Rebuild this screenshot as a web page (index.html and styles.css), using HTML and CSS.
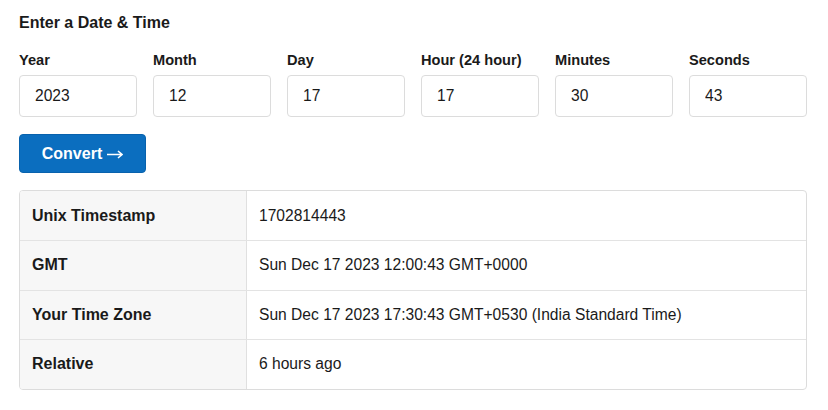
FILE: index.html
```html
<!DOCTYPE html>
<html>
<head>
<meta charset="utf-8">
<link rel="stylesheet" href="styles.css">
</head>
<body>
<div class="page">
  <h2 class="title">Enter a Date &amp; Time</h2>
  <div class="fields">
    <label class="field"><span class="label">Year</span><input class="input" value="2023"></label>
    <label class="field"><span class="label">Month</span><input class="input" value="12"></label>
    <label class="field"><span class="label">Day</span><input class="input" value="17"></label>
    <label class="field"><span class="label">Hour (24 hour)</span><input class="input" value="17"></label>
    <label class="field"><span class="label">Minutes</span><input class="input" value="30"></label>
    <label class="field"><span class="label">Seconds</span><input class="input" value="43"></label>
  </div>
  <button class="btn">Convert<svg class="arrow" width="16" height="10" viewBox="0 0 16 10"><path d="M0 5.5H15M11 2L15 5.5L11 9" fill="none" stroke="#fff" stroke-width="1.6"/></svg></button>
  <div class="result">
    <div class="row"><div class="key">Unix Timestamp</div><div class="val">1702814443</div></div>
    <div class="row"><div class="key">GMT</div><div class="val">Sun Dec 17 2023 12:00:43 GMT+0000</div></div>
    <div class="row"><div class="key">Your Time Zone</div><div class="val">Sun Dec 17 2023 17:30:43 GMT+0530 (India Standard Time)</div></div>
    <div class="row"><div class="key">Relative</div><div class="val">6 hours ago</div></div>
  </div>
</div>
</body>
</html>
```
FILE: styles.css
```css
* { box-sizing: border-box; }
html, body { margin: 0; background: #fff; }
body {
  font-family: "Liberation Sans", Arial, sans-serif;
  color: #1a1a1a;
}
.page {
  padding: 13px 22px 0 19px;
  width: 828px;
}
.title {
  margin: 0;
  font-size: 16px;
  line-height: 20px;
  font-weight: bold;
}
.fields {
  display: grid;
  grid-template-columns: repeat(6, 118px);
  column-gap: 16px;
  margin-top: 18px;
}
.field { display: flex; flex-direction: column; }
.label {
  font-size: 14.6px;
  line-height: 18px;
  font-weight: bold;
}
.input {
  margin-top: 6px;
  height: 42px;
  width: 118px;
  border: 1px solid #dcdcdc;
  border-radius: 4px;
  padding: 0 15px;
  font-family: inherit;
  font-size: 15.6px;
  color: #1a1a1a;
  background: #fff;
  outline: none;
}
.btn {
  display: flex;
  align-items: center;
  justify-content: center;
  gap: 5px;
  margin-top: 17px;
  width: 127px;
  height: 39px;
  border: 1px solid #0862ad;
  border-radius: 4px;
  background: #0b6ebf;
  color: #fff;
  font-family: inherit;
  font-size: 16px;
  font-weight: bold;
  padding: 0;
}
.arrow { display: block; flex: none; }
.result {
  margin-top: 17px;
  width: 788px;
  border: 1px solid #dcdcdc;
  border-radius: 4px;
  overflow: hidden;
}
.row {
  display: flex;
  height: 49.5px;
  border-top: 1px solid #e3e3e3;
}
.row:first-child { border-top: none; height: 49px; }
.key {
  width: 227px;
  flex: none;
  background: #f7f7f7;
  border-right: 1px solid #e0e0e0;
  padding-left: 12px;
  display: flex;
  align-items: center;
  font-weight: bold;
  font-size: 16px;
}
.val {
  flex: 1;
  padding-left: 12px;
  display: flex;
  align-items: center;
  font-size: 15.6px;
}
```
